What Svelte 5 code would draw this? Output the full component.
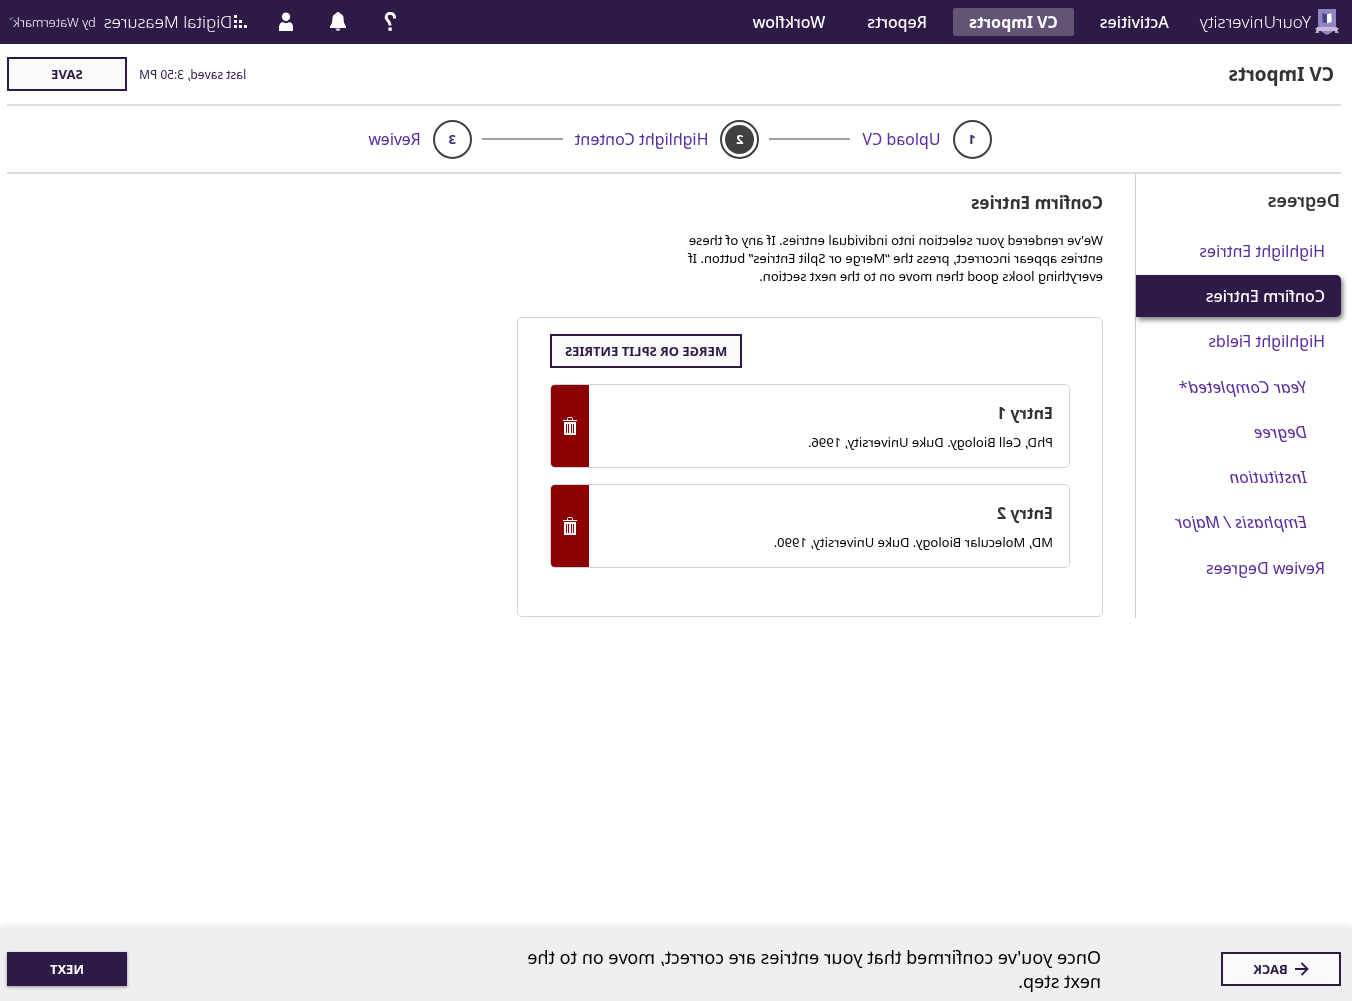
<script>
  const menu = ['Activities', 'CV Imports', 'Reports', 'Workflow'];
  const currentMenu = 'CV Imports';
  const steps = ['Upload CV', 'Highlight Content', 'Review'];
  const currentStep = 1;
  const sections = [
    { label: 'Highlight Entries' },
    { label: 'Confirm Entries', active: true },
    { label: 'Highlight Fields', children: ['Year Completed*', 'Degree', 'Institution', 'Emphasis / Major'] },
    { label: 'Review Degrees' }
  ];
  let entries = $state([
    { id: 1, text: 'PhD, Cell Biology. Duke University, 1996.' },
    { id: 2, text: 'MD, Molecular Biology. Duke University, 1990.' }
  ]);
  function remove(id) {
    entries = entries.filter((e) => e.id !== id);
  }
</script>

<div class="page">
  <header class="topbar">
    <a class="school" href="#home">
      <svg width="26" height="28" viewBox="0 0 26 28" aria-hidden="true">
        <path d="M4 1h18v16c0 5-5 8-9 10C9 25 4 22 4 17z" fill="#8d86c4" />
        <path d="M1 20h4v5H1l1.500-2.500zM21 20h4l-1.500 2.500L25 25h-4z" fill="#b7a5cf" />
        <path d="M3 19h20v4H3z" fill="#c8b6dc" />
        <path d="M8.500 5l4.500 1.500v9L8.500 14z" fill="#fff" />
        <path d="M17.500 5L13 6.500v9l4.500-1.500z" fill="#4c3f8f" />
      </svg>
      <span>YourUniversity</span>
    </a>
    <nav class="menu" aria-label="Main">
      {#each menu as item}
        <a href="#{item}" class:current={item === currentMenu}>{item}</a>
      {/each}
    </nav>
    <div class="tools">
      <button aria-label="Help">
        <svg width="14" height="20" viewBox="0 0 14 20">
          <path d="M2.500 6.500V5.500a4.200 4 0 0 1 8.400-.3c0 3.300-4 3.600-4 8.300" fill="none" stroke="#fff" stroke-width="3" />
          <rect x="5.200" y="15.500" width="3.400" height="3.300" fill="#fff" />
        </svg>
      </button>
      <button aria-label="Notifications">
        <svg width="18" height="20" viewBox="0 0 18 20">
          <path d="M9 0a2 2 0 0 1 2 1.600c2.300.7 3.600 2.600 3.600 5 0 4.300.9 6 2.400 7.400V16H1v-2c1.500-1.400 2.400-3.100 2.400-7.400 0-2.400 1.300-4.300 3.600-5A2 2 0 0 1 9 0z" fill="#fff" />
          <path d="M6.500 16.500h5a2.500 2.500 0 0 1-5 0z" fill="#fff" opacity=".8" />
        </svg>
      </button>
      <button aria-label="Account">
        <svg width="14" height="20" viewBox="0 0 14 20">
          <circle cx="7" cy="4.800" r="4.200" fill="#fff" />
          <path d="M0 19v-4c0-3 1.800-4.600 3.600-5 1.900 1.500 4.900 1.500 6.800 0 1.800.4 3.600 2 3.600 5v4z" fill="#fff" />
        </svg>
      </button>
    </div>
    <a class="brand" href="#brand">
      <svg width="14" height="14" viewBox="0 0 14 14" aria-hidden="true">
        <path d="M0 10h3v3H0zM5 10h3v3H5zM10 10h3v3h-3zM5 5h3v3H5zM10 5h3v3h-3zM10 0h3v3h-3z" fill="#fff" />
      </svg>
      <span class="product">Digital Measures</span>
      <span class="maker">by Watermark<span class="tm">™</span></span>
    </a>
  </header>

  <div class="titlebar">
    <h1>CV Imports</h1>
    <span class="saved">last saved, 3:50 PM</span>
    <button class="btn">SAVE</button>
  </div>

  <ol class="steps">
    {#each steps as step, i}
      <li class:on={i === currentStep}>
        <span class="num"><b>{i + 1}</b></span>
        <a href="#step-{i + 1}">{step}</a>
      </li>
    {/each}
  </ol>

  <div class="body">
    <nav class="side" aria-label="Degrees">
      <h2>Degrees</h2>
      <ul>
        {#each sections as s}
          <li>
            <a href="#{s.label}" class:active={s.active}>{s.label}</a>
            {#if s.children}
              <ul class="sub">
                {#each s.children as c}
                  <li><a href="#{c}">{c}</a></li>
                {/each}
              </ul>
            {/if}
          </li>
        {/each}
      </ul>
    </nav>

    <main>
      <h2>Confirm Entries</h2>
      <p class="intro">
        We've rendered your selection into individual entries. If any of these entries appear
        incorrect, press the “Merge or Split Entries” button. If everything looks good then move on
        to the next section.
      </p>
      <section class="card">
        <button class="btn merge">MERGE OR SPLIT ENTRIES</button>
        {#each entries as entry (entry.id)}
          <article class="entry">
            <div class="info">
              <h3>Entry {entry.id}</h3>
              <p>{entry.text}</p>
            </div>
            <button class="delete" aria-label="Delete entry {entry.id}" onclick={() => remove(entry.id)}>
              <svg width="14" height="18" viewBox="0 0 14 18">
                <path d="M4.500 3V1.500a1 1 0 0 1 1-1h3a1 1 0 0 1 1 1V3" fill="none" stroke="#fff" />
                <path d="M0 3h14v1H0z" fill="#fff" />
                <path fill-rule="evenodd" d="M1 5h12v13H1zM3 7v9h1V7zM5 7v9h1V7zM8 7v9h1V7zM10 7v9h1V7z" fill="#fff" />
              </svg>
            </button>
          </article>
        {/each}
      </section>
    </main>
  </div>

  <footer>
    <button class="btn">
      <svg width="14" height="14" viewBox="0 0 14 14" aria-hidden="true">
        <path d="M14 7H1.500M7.500 1l-6 6 6 6" fill="none" stroke="#2e1a47" stroke-width="1.800" />
      </svg>
      BACK
    </button>
    <p>Once you've confirmed that your entries are correct, move on to the next step.</p>
    <button class="btn primary">NEXT</button>
  </footer>
</div>

<style>
  :global(body) {
    margin: 0;
    background: #fff;
    overflow-x: hidden;
  }
  .page {
    display: flex;
    flex-direction: column;
    min-height: 100vh;
    transform: scaleX(-1);
    font-family: 'Noto Sans', sans-serif;
    font-size: 16px;
    color: #000;
  }
  .page :is(h1, h2, h3, p, ul, ol) {
    margin: 0;
    padding: 0;
    list-style: none;
  }
  a {
    color: #582c9e;
    text-decoration: none;
  }
  button {
    font: inherit;
    cursor: pointer;
    border: 0;
    padding: 0;
    background: none;
  }
  svg {
    display: block;
  }
  .topbar {
    display: flex;
    align-items: center;
    height: 44px;
    padding: 0 9px 0 12px;
    background: #2e1a47;
  }
  .topbar a {
    color: #fff;
  }
  .school {
    display: flex;
    align-items: center;
    gap: 3px;
    font: 300 17px/24px 'Noto Sans', sans-serif;
  }
  .menu {
    display: flex;
    gap: 10px;
    margin-left: 15px;
  }
  .menu a {
    padding: 0 16px;
    line-height: 28px;
    font-weight: 500;
    border-radius: 2px;
  }
  .menu a.current {
    font-weight: 700;
    background: #635375;
  }
  .tools {
    display: flex;
    gap: 36px;
    margin: 0 32px 0 auto;
  }
  .brand {
    display: flex;
    align-items: center;
    gap: 1px;
    font: 300 17px/24px 'Noto Sans', sans-serif;
  }
  .maker {
    display: flex;
    margin-left: 7px;
    font-size: 13px;
  }
  .tm {
    font-size: 6px;
    line-height: 20px;
    opacity: 0.6;
  }
  .titlebar {
    display: flex;
    align-items: center;
    height: 60px;
    margin: 0 7px 0 11px;
    padding-left: 7px;
    border-bottom: 2px solid #ddd;
  }
  h1 {
    font-size: 19px;
    line-height: 26px;
    font-weight: 700;
    color: #333;
  }
  .saved {
    margin: 0 12px 0 auto;
    font-size: 12px;
    color: #2e1a47;
  }
  .btn {
    box-sizing: border-box;
    display: flex;
    align-items: center;
    justify-content: center;
    gap: 7px;
    width: 120px;
    height: 34px;
    border: 2px solid #2e1a47;
    background: #fafafa;
    color: #2e1a47;
    font-size: 13px;
    font-weight: 700;
  }
  .primary {
    background: #2e1a47;
    color: #fff;
    box-shadow: 0 1px 3px rgba(0, 0, 0, 0.4);
  }
  .steps {
    display: flex;
    align-items: center;
    justify-content: center;
    height: 66px;
    border-bottom: 2px solid #ddd;
  }
  .page .steps {
    margin: 0 7px 0 11px;
    padding-right: 12px;
  }
  .steps li {
    display: flex;
    align-items: center;
    gap: 12px;
  }
  .steps li:not(:last-child)::after {
    content: '';
    width: 81px;
    height: 2px;
    margin-right: 10px;
    background: #a0a0a0;
  }
  .num {
    box-sizing: border-box;
    display: flex;
    width: 39px;
    height: 39px;
    padding: 3px;
    border: 2px solid #404040;
    border-radius: 50%;
    color: #3f2a70;
    font-size: 13px;
    line-height: 29px;
    text-align: center;
  }
  .num b {
    flex: 1;
    border-radius: 50%;
  }
  .on .num b {
    background: #404040;
    color: #fff;
  }
  .body {
    display: flex;
    flex: 1;
    align-items: flex-start;
    padding: 0 7px 24px 11px;
  }
  .side {
    width: 205px;
    padding-bottom: 26px;
    border-right: 1px solid #ccc;
  }
  .page .side h2 {
    padding: 14px 0 18px 1px;
    font-size: 18px;
    line-height: 24px;
    font-weight: 600;
    color: #333;
  }
  .side a {
    display: block;
    margin-bottom: 3px;
    padding-left: 16px;
    line-height: 42px;
  }
  .page .sub {
    padding: 1px 0;
  }
  .sub a {
    padding-left: 34px;
    font-size: 17px;
    font-style: italic;
  }
  .side a.active {
    border-radius: 5px 0 0 5px;
    background: #2e1a47;
    color: #fff;
    font-weight: 500;
    box-shadow: -2px 3px 5px rgba(0, 0, 0, 0.5);
  }
  main {
    flex: 0 1 586px;
    margin-left: 32px;
  }
  .page main h2 {
    padding-top: 16px;
    font-size: 17px;
    line-height: 26px;
    font-weight: 700;
    color: #333;
  }
  .page .intro {
    max-width: 425px;
    margin: 15px 0 32px;
    font-size: 13px;
    line-height: 18px;
  }
  .card {
    display: flex;
    flex-direction: column;
    gap: 16px;
    padding: 16px 32px 48px;
    border: 1px solid #d3d3d3;
    border-radius: 5px;
  }
  .merge {
    align-self: flex-end;
    width: auto;
    padding: 0 13px;
  }
  .entry {
    display: flex;
    border: 1px solid #d3d3d3;
    border-radius: 5px;
    overflow: hidden;
  }
  .info {
    flex: 1;
    padding: 16px;
  }
  h3 {
    font-size: 16px;
    line-height: 24px;
    font-weight: 700;
    color: #333;
  }
  .page .info p {
    padding-top: 8px;
    font-size: 13px;
    line-height: 18px;
  }
  .delete {
    display: grid;
    place-items: center;
    width: 38px;
    background: #8b0000;
  }
  footer {
    position: sticky;
    bottom: 0;
    display: flex;
    align-items: center;
    padding: 16px 7px 8px 11px;
    background: #efefef;
    box-shadow: 0 -2px 8px rgba(0, 0, 0, 0.12);
  }
  footer p {
    flex: 0 1 585px;
    font-size: 18px;
    line-height: 24px;
  }
  .page footer p {
    margin: 0 auto 0 120px;
  }
</style>
